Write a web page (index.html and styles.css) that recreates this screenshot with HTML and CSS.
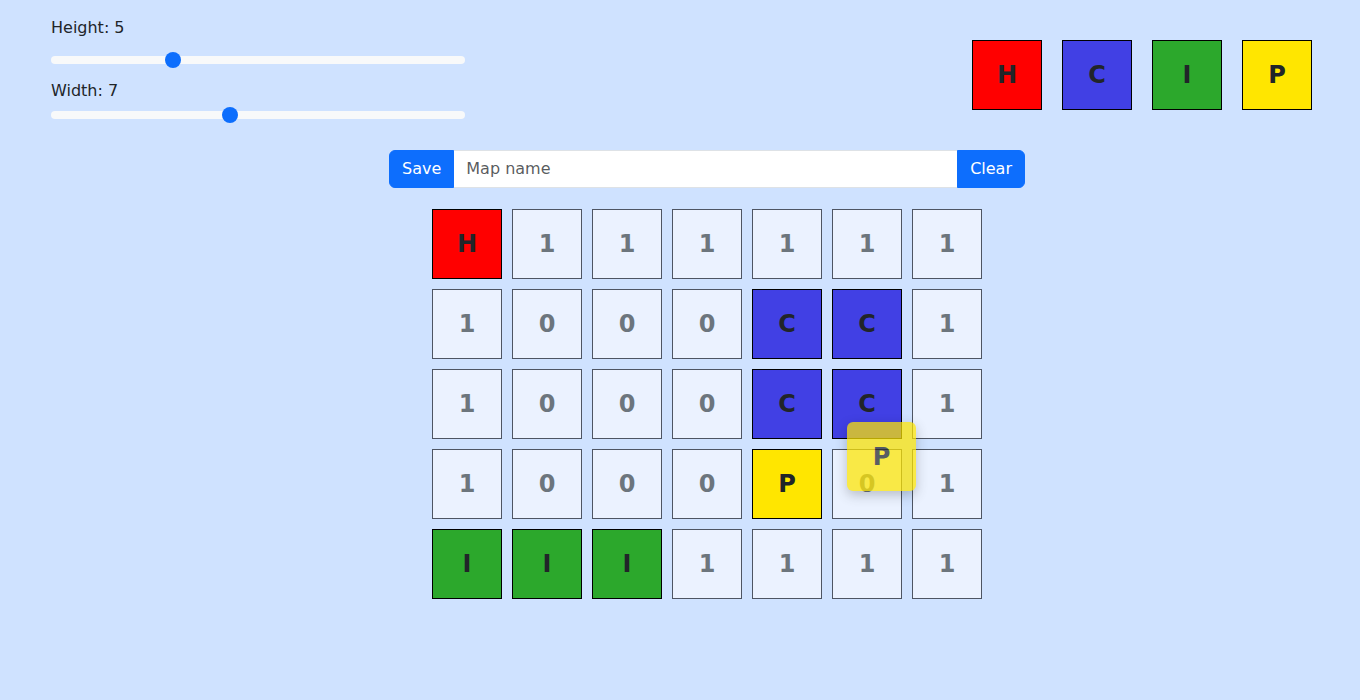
FILE: index.html
```html
<!DOCTYPE html>
<html lang="en">
<head>
<meta charset="utf-8">
<title>Map editor</title>
<link rel="stylesheet" href="styles.css">
</head>
<body>
<div class="top">
  <div class="controls">
    <label class="lbl lbl-h" for="h">Height: 5</label>
    <input class="range" id="h" type="range" min="1" max="15" value="5">
    <label class="lbl lbl-w" for="w">Width: 7</label>
    <input class="range range-w" id="w" type="range" min="1" max="15" value="7">
  </div>
  <div class="palette">
    <div class="tile t-h">H</div>
    <div class="tile t-c">C</div>
    <div class="tile t-i">I</div>
    <div class="tile t-p">P</div>
  </div>
</div>
<div class="main">
  <div class="editor">
    <div class="igroup">
      <button class="btn btn-l">Save</button>
      <input class="name" type="text" placeholder="Map name">
      <button class="btn btn-r">Clear</button>
    </div>
    <div class="grid">
      <div class="cell t-h">H</div><div class="cell e">1</div><div class="cell e">1</div><div class="cell e">1</div><div class="cell e">1</div><div class="cell e">1</div><div class="cell e">1</div>
      <div class="cell e">1</div><div class="cell e">0</div><div class="cell e">0</div><div class="cell e">0</div><div class="cell t-c">C</div><div class="cell t-c">C</div><div class="cell e">1</div>
      <div class="cell e">1</div><div class="cell e">0</div><div class="cell e">0</div><div class="cell e">0</div><div class="cell t-c">C</div><div class="cell t-c">C</div><div class="cell e">1</div>
      <div class="cell e">1</div><div class="cell e">0</div><div class="cell e">0</div><div class="cell e">0</div><div class="cell t-p">P</div><div class="cell e">0</div><div class="cell e">1</div>
      <div class="cell t-i">I</div><div class="cell t-i">I</div><div class="cell t-i">I</div><div class="cell e">1</div><div class="cell e">1</div><div class="cell e">1</div><div class="cell e">1</div>
    </div>
  </div>
</div>
<div class="ghost">P</div>
</body>
</html>
```
FILE: styles.css
```css
* { box-sizing: border-box; }
html, body { margin: 0; }
body {
  background: #cfe2ff;
  font-family: "DejaVu Sans", sans-serif;
  font-size: 16px;
  line-height: 1.5;
  color: #212529;
  min-height: 700px;
  position: relative;
}
.top {
  display: flex;
  justify-content: space-between;
  align-items: flex-start;
  padding: 15.5px 48px 0 51px;
}
.controls {
  display: flex;
  flex-direction: column;
  width: 414px;
}
.lbl { display: block; height: 24px; }
.lbl-h { margin-bottom: 8px; }
.lbl-w { margin-top: 7px; margin-bottom: 0; }
.range {
  -webkit-appearance: none;
  appearance: none;
  display: block;
  width: 414px;
  height: 24px;
  margin: 0;
  padding: 0;
  background: transparent;
}
.range::-webkit-slider-runnable-track {
  height: 8px;
  border-radius: 4px;
  background: #f8f9fa;
}
.range::-webkit-slider-thumb {
  -webkit-appearance: none;
  appearance: none;
  width: 16px;
  height: 16px;
  margin-top: -4px;
  border-radius: 50%;
  border: 0;
  background: #0d6efd;
}
.palette {
  display: flex;
  gap: 20px;
  margin-top: 24.5px;
}
.tile, .cell {
  width: 70px;
  height: 70px;
  display: flex;
  align-items: center;
  justify-content: center;
  font-size: 24px;
  font-weight: bold;
  border: 1px solid #000;
  color: #212529;
}
.t-h { background: #ff0000; }
.t-c { background: #4140e4; }
.t-i { background: #2ca82c; }
.t-p { background: #ffe600; }
.main {
  display: flex;
  justify-content: center;
  padding-left: 54px;
  margin-top: 23.5px;
}
.editor {
  display: flex;
  flex-direction: column;
  align-items: center;
}
.igroup {
  display: flex;
  width: 636px;
  height: 38px;
}
.btn {
  font: inherit;
  line-height: 1.5;
  color: #fff;
  background: #0d6efd;
  border: 1px solid #0d6efd;
  padding: 6px 12px;
  margin: 0;
}
.btn-l { border-radius: 6px 0 0 6px; }
.btn-r { border-radius: 0 6px 6px 0; }
.name {
  flex: 1;
  min-width: 0;
  font: inherit;
  line-height: 1.5;
  padding: 6px 12px;
  margin: 0;
  border: 1px solid #dee2e6;
  border-left: 0;
  border-right: 0;
  background: #fff;
  color: #212529;
  outline: none;
}
.name::placeholder { color: rgba(33, 37, 41, 0.75); }
.grid {
  display: grid;
  grid-template-columns: repeat(7, 70px);
  gap: 10px;
  margin-top: 21px;
}
.cell.e {
  background: #ebf2ff;
  border-color: #4e5563;
  color: #6c757d;
}
.ghost {
  position: absolute;
  left: 847px;
  top: 422px;
  width: 69px;
  height: 69px;
  display: flex;
  align-items: center;
  justify-content: center;
  font-size: 24px;
  font-weight: bold;
  color: #212529;
  background: #ffe600;
  border-radius: 6px;
  opacity: 0.72;
  box-shadow: 0 4px 12px rgba(0, 0, 0, 0.3);
}
```
